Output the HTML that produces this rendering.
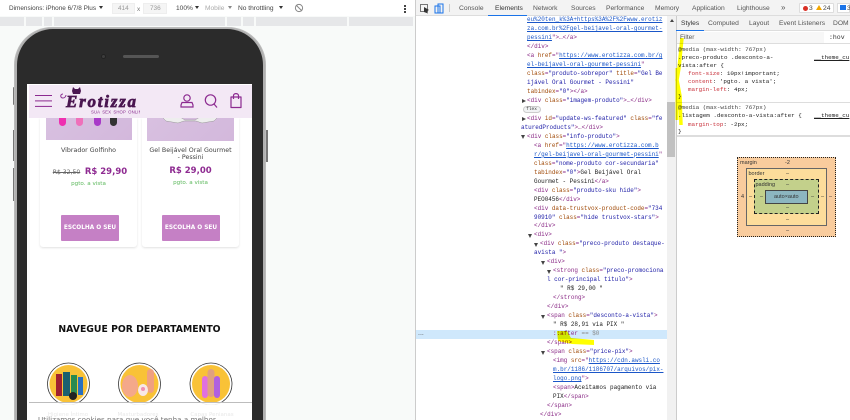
<!DOCTYPE html>
<html><head><meta charset="utf-8">
<style>
html,body{margin:0;padding:0;width:850px;height:420px;overflow:hidden;background:#fff}
*{box-sizing:border-box}
#wrap{position:absolute;left:0;top:0;width:850px;height:420px;overflow:hidden;filter:blur(.3px)}
.abs,.x{position:absolute}
.ui{font-family:"Liberation Sans",sans-serif;font-size:7px;color:#444;white-space:nowrap;position:absolute;line-height:9px}
.m{font-family:"DejaVu Sans","Liberation Sans",sans-serif;position:absolute;white-space:nowrap;text-align:center}
#code{position:absolute;left:416px;top:16.2px;width:251px;height:404px;overflow:hidden;font-family:"Liberation Mono",monospace;font-size:5.95px;color:#222}
#code div{height:8.97px;line-height:8.97px;white-space:pre;position:relative}
.g{color:#8a2a86}.a{color:#a04a08}.v{color:#2020a8}.u{color:#1a56c8;text-decoration:underline}
.t,.d{position:absolute;top:2.5px;width:0;height:0}
.t{margin-left:-5px;border-left:4px solid #444;border-top:2px solid transparent;border-bottom:2px solid transparent}
.d{margin-left:-6px;border-top:4px solid #444;border-left:2px solid transparent;border-right:2px solid transparent}
.s{position:absolute;font-family:"Liberation Mono",monospace;font-size:5.9px;line-height:8px;white-space:pre;color:#222}
.p{color:#c8303a}
.bm{position:absolute;font-family:"Liberation Sans",sans-serif;font-size:5.5px;color:#333;line-height:6px;white-space:nowrap}
</style></head><body>
<div id="wrap">

<!-- left panel -->
<div class="abs" style="left:0;top:0;width:415px;height:420px;background:#f8faf9"></div>
<div class="abs" style="left:0;top:0;width:415px;height:16px;background:#fff"></div>
<div class="ui" style="left:9px;top:4px;font-size:6.4px">Dimensions: iPhone 6/7/8 Plus</div>
<div class="abs" style="left:99px;top:6px;border-top:3px solid #333;border-left:2px solid transparent;border-right:2px solid transparent"></div>
<div class="abs" style="left:112px;top:3px;width:23px;height:11px;background:#f5f5f5;border:1px solid #eee"></div>
<div class="abs" style="left:143px;top:3px;width:24px;height:11px;background:#f5f5f5;border:1px solid #eee"></div>
<div class="ui" style="left:118px;top:4px;font-size:6.4px;color:#999">414</div>
<div class="ui" style="left:137px;top:5px;font-size:6.4px;color:#777">x</div>
<div class="ui" style="left:150px;top:4px;font-size:6.4px;color:#999">736</div>
<div class="ui" style="left:176px;top:4px;font-size:6.6px">100%</div>
<div class="abs" style="left:195px;top:6px;border-top:3px solid #333;border-left:2px solid transparent;border-right:2px solid transparent"></div>
<div class="ui" style="left:205px;top:4px;font-size:6.6px;color:#aaa">Mobile</div>
<div class="abs" style="left:228px;top:6px;border-top:3px solid #888;border-left:2px solid transparent;border-right:2px solid transparent"></div>
<div class="ui" style="left:238px;top:4px;font-size:6.6px">No throttling</div>
<div class="abs" style="left:279px;top:6px;border-top:3px solid #333;border-left:2px solid transparent;border-right:2px solid transparent"></div>
<svg class="abs" style="left:294px;top:3px" width="10" height="10" viewBox="0 0 10 10"><circle cx="5" cy="5" r="3.6" fill="none" stroke="#888"/><path d="M2 2L8 8" stroke="#888"/></svg>
<div class="abs" style="left:404px;top:5px;width:1.5px;height:1.5px;background:#444;box-shadow:0 3px #444,0 6px #444"></div>
<!-- media bars -->
<div class="abs" style="left:0;top:17px;width:413px;height:9px;background:#e6e7e9"></div>
<div class="abs" style="left:24px;top:17px;width:2px;height:9px;background:#f8faf9"></div>
<div class="abs" style="left:42px;top:17px;width:2px;height:9px;background:#f8faf9"></div>
<div class="abs" style="left:52px;top:17px;width:2px;height:9px;background:#f8faf9"></div>
<div class="abs" style="left:225px;top:17px;width:2px;height:9px;background:#f8faf9"></div>
<div class="abs" style="left:241px;top:17px;width:2px;height:9px;background:#f8faf9"></div>
<div class="abs" style="left:254px;top:17px;width:2px;height:9px;background:#f8faf9"></div>
<div class="abs" style="left:347px;top:17px;width:2px;height:9px;background:#f8faf9"></div>

<!-- phone -->
<div class="abs" style="left:13px;top:87px;width:3px;height:18px;background:#777;border-radius:1px"></div>
<div class="abs" style="left:13px;top:130px;width:3px;height:31px;background:#777"></div>
<div class="abs" style="left:13px;top:168px;width:3px;height:33px;background:#777"></div>
<div class="abs" style="left:265px;top:130px;width:3px;height:32px;background:#777"></div>
<div class="abs" style="left:14px;top:27px;width:252px;height:393px;border-radius:38px 38px 0 0;background:#b0b0b0;border:1px solid #bbb;border-bottom:0"></div>
<div class="abs" style="left:16.5px;top:29px;width:246px;height:391px;border-radius:36px 36px 0 0;background:#2b2b2b"></div>
<div class="abs" style="left:101px;top:54px;width:5px;height:5px;border-radius:50%;background:#3d3d3d;border:1px solid #222"></div>
<div class="abs" style="left:123px;top:55px;width:36px;height:3px;border-radius:2px;background:#555"></div>
<!-- screen -->
<div class="abs" style="left:27px;top:84px;width:225px;height:336px;background:#fff"></div>

<!-- product images -->
<div class="abs" style="left:40px;top:118px;width:97px;height:129px;background:#fff;border-radius:0 0 3px 3px;box-shadow:0 1px 2px rgba(0,0,0,.12)"></div>
<div class="abs" style="left:142px;top:118px;width:97px;height:129px;background:#fff;border-radius:0 0 3px 3px;box-shadow:0 1px 2px rgba(0,0,0,.12)"></div>
<div class="abs" style="left:46px;top:118px;width:86px;height:22px;background:linear-gradient(135deg,#d8c0e0,#d3b8dc)"></div>
<div class="abs" style="left:147px;top:118px;width:87px;height:23px;background:linear-gradient(135deg,#d8c0e0,#d3b8dc)"></div>
<div class="abs" style="left:59px;top:116px;width:7px;height:10px;border-radius:0 0 4px 4px;background:#ef2fb0"></div>
<div class="abs" style="left:76px;top:116px;width:7px;height:10px;border-radius:0 0 4px 4px;background:#ef70ba"></div>
<div class="abs" style="left:94px;top:116px;width:7px;height:10px;border-radius:0 0 4px 4px;background:#a83ac8"></div>
<div class="abs" style="left:110px;top:116px;width:7px;height:10px;border-radius:0 0 4px 4px;background:#333"></div>
<svg class="abs" style="left:160px;top:117px" width="60" height="8"><path d="M2 0L20 0L25 3L35 3L40 0L58 0L54 4L42 6L36 4L24 4L18 6L6 4Z" fill="#eee" stroke="#999" stroke-width=".5"/></svg>

<!-- header -->
<div class="abs" style="left:29px;top:85px;width:223px;height:33px;background:#f3e8f5"></div>
<div class="abs" style="left:35px;top:95px;width:17px;height:1.4px;background:#8c2a90;box-shadow:0 5.4px #8c2a90,0 10.9px #8c2a90"></div>
<!-- logo -->
<svg class="abs" style="left:58px;top:85px" width="82" height="34" viewBox="0 0 82 34">
<path d="M5 9C2 9 2 13 5 13C7 13 8 11 8 10" fill="none" stroke="#8a2f90" stroke-width="1"/>
<path d="M14 6L15 2L17 4L20 4L22 2L23 6L22 9L15 9Z" fill="#4a1650"/>
<text x="8" y="22" font-family="Liberation Serif,serif" font-style="italic" font-weight="700" font-size="17" fill="#4a1650" stroke="#4a1650" stroke-width=".7" textLength="70" lengthAdjust="spacing">Erotizza</text>
<text x="33" y="28.500" font-family="Liberation Sans,sans-serif" font-size="4.300" fill="#8a2f90" letter-spacing=".1" word-spacing="1">SUA SEX SHOP ONLINE</text>
</svg>
<!-- header icons -->
<svg class="abs" style="left:178px;top:92px" width="68" height="18" viewBox="0 0 68 18" fill="none" stroke="#8c2a90" stroke-width="1.2">
<circle cx="9" cy="6" r="3.2"/><path d="M4 10.5H14L15 13V15H3V13Z"/>
<circle cx="32.5" cy="8" r="5.2"/><path d="M36 12L39 15.5"/>
<path d="M53 5H63V15.5H53Z" stroke-linejoin="round"/><path d="M55.5 7V3.5C55.500 1 60.500 1 60.500 3.500V7"/>
</svg>

<!-- product 1 -->
<div class="m" style="left:40px;top:147px;width:97px;font-size:6.300px;line-height:8px;color:#444">Vibrador Golfinho</div>
<div class="m" style="left:50px;top:168.500px;width:33px;font-size:6.100px;line-height:8px;color:#666;text-decoration:line-through">R$ 32,50</div>
<div class="m" style="left:84px;top:166px;width:44px;font-size:8.500px;line-height:12px;font-weight:700;color:#8e2a91">R$ 29,90</div>
<div class="m" style="left:40px;top:180px;width:97px;font-size:5.600px;line-height:8px;color:#5cb85c">pgto. a vista</div>
<div class="m" style="left:61px;top:215px;width:58px;height:26px;background:#c580c5;border-radius:1px;color:#fff;font-size:5.800px;font-weight:700;line-height:26px">ESCOLHA O SEU</div>
<!-- product 2 -->
<div class="m" style="left:142px;top:147px;width:97px;font-size:6.300px;line-height:7px;color:#444">Gel Beijável Oral Gourmet<br>- Pessini</div>
<div class="m" style="left:142px;top:165px;width:97px;font-size:8.500px;line-height:12px;font-weight:700;color:#8e2a91">R$ 29,00</div>
<div class="m" style="left:142px;top:179px;width:97px;font-size:5.600px;line-height:8px;color:#5cb85c">pgto. a vista</div>
<div class="m" style="left:162px;top:215px;width:58px;height:26px;background:#c580c5;border-radius:1px;color:#fff;font-size:5.800px;font-weight:700;line-height:26px">ESCOLHA O SEU</div>
<!-- heading -->
<div class="m" style="left:27px;top:322.500px;width:225px;font-size:9.300px;line-height:14px;font-weight:700;color:#111">NAVEGUE POR DEPARTAMENTO</div>
<!-- circles -->
<svg class="abs" style="left:27px;top:355px" width="225" height="50" viewBox="27 355 225 50">
<g fill="#fff" stroke="#333" stroke-width=".8"><circle cx="68.5" cy="384" r="21"/><circle cx="139.5" cy="384" r="21"/><circle cx="211" cy="384" r="21"/></g>
<g fill="#f9c237"><circle cx="68.5" cy="384" r="19"/><circle cx="139.5" cy="384" r="19"/><circle cx="211" cy="384" r="19"/></g>
<rect x="56" y="374" width="6" height="22" fill="#a02030"/><rect x="63" y="372" width="7" height="24" fill="#1a6070"/><rect x="71" y="375" width="6" height="21" fill="#2a8a50"/><rect x="78" y="377" width="5" height="18" fill="#2a70c0"/><circle cx="73" cy="396" r="4" fill="#222"/>
<ellipse cx="130" cy="386" rx="8" ry="11" fill="#f4a88a"/><rect x="147" y="369" width="7" height="24" rx="3.5" fill="#f0a080"/><ellipse cx="143" cy="390" rx="5" ry="6" fill="#f8e8e8"/><circle cx="143" cy="389" r="2" fill="#f090b0"/>
<rect x="202" y="376" width="6" height="22" rx="3" fill="#e070e0"/><rect x="207.500" y="369" width="7" height="28" rx="3.500" fill="#e0a080"/><rect x="214" y="376" width="6" height="22" rx="3" fill="#b060e0"/>
</svg>
<!-- cookie overlay -->
<div class="abs" style="left:29px;top:402px;width:223px;height:18px;background:rgba(255,255,255,.9);border-top:1.2px solid #bdbdbd"></div>
<div class="m" style="left:38px;top:411px;width:60px;font-size:5.500px;line-height:8px;color:#e8e8e8">Higiene Íntimo</div>
<div class="m" style="left:108px;top:411px;width:60px;font-size:5.500px;line-height:8px;color:#e8e8e8">Masturbadores</div>
<div class="m" style="left:182px;top:411px;width:60px;font-size:5.500px;line-height:8px;color:#e8e8e8">Capas Penianas</div>
<div class="m" style="left:38px;top:415px;font-size:7.200px;line-height:9px;color:#777">Utilizamos cookies para que você tenha a melhor</div>

<!-- divider -->
<div class="abs" style="left:415px;top:0;width:1px;height:420px;background:#ccc"></div>

<!-- devtools tabs -->
<div class="abs" style="left:416px;top:0;width:434px;height:15.500px;background:#f3f3f3;border-bottom:1px solid #ddd"></div>
<svg class="abs" style="left:419px;top:3px" width="28" height="11" viewBox="0 0 28 11">
<rect x="1.500" y="1.500" width="7" height="7" fill="none" stroke="#555" stroke-width=".8"/><path d="M5 4L10 7L8 8L9 10.500L5 9Z" fill="#333"/>
<rect x="16" y="3" width="5" height="7" fill="none" stroke="#1a73e8"/><rect x="19" y="1" width="5" height="9" fill="none" stroke="#1a73e8"/>
</svg>
<div class="abs" style="left:449px;top:4px;width:1px;height:8px;background:#ccc"></div>
<div class="ui" style="left:459px;top:4px;font-size:6.700px;color:#555">Console</div>
<div class="ui" style="left:495px;top:4px;font-size:6.700px;color:#333">Elements</div>
<div class="abs" style="left:488px;top:14.500px;width:39px;height:1.500px;background:#1a73e8"></div>
<div class="ui" style="left:533px;top:4px;font-size:6.700px;color:#555">Network</div>
<div class="ui" style="left:571px;top:4px;font-size:6.700px;color:#555">Sources</div>
<div class="ui" style="left:606px;top:4px;font-size:6.700px;color:#555">Performance</div>
<div class="ui" style="left:655px;top:4px;font-size:6.700px;color:#555">Memory</div>
<div class="ui" style="left:692px;top:4px;font-size:6.700px;color:#555">Application</div>
<div class="ui" style="left:737px;top:4px;font-size:6.700px;color:#555">Lighthouse</div>
<div class="ui" style="left:781px;top:3px;font-size:8px;color:#555">»</div>
<div class="abs" style="left:799px;top:3px;width:35px;height:10px;background:#fff;border:1px solid #ddd;border-radius:1px"></div>
<div class="abs" style="left:803px;top:5.500px;width:5px;height:5px;border-radius:50%;background:#d93025"></div>
<div class="ui" style="left:809px;top:4px;font-size:6.700px">3</div>
<div class="abs" style="left:816px;top:5px;border-bottom:5.500px solid #f2a600;border-left:3px solid transparent;border-right:3px solid transparent"></div>
<div class="ui" style="left:823px;top:4px;font-size:6.700px">24</div>
<div class="abs" style="left:837px;top:3px;width:13px;height:10px;background:#fff;border:1px solid #ddd"></div>
<div class="abs" style="left:840px;top:5px;width:6px;height:5px;background:#1a73e8"></div>
<div class="ui" style="left:847px;top:4px;font-size:6.700px">3</div>

<!-- code -->
<div class="abs" style="left:416px;top:330px;width:251px;height:9px;background:#cfe8fc"></div>
<div class="ui" style="left:418px;top:329px;font-size:7px;color:#555">...</div>
<div id="code">
<div style="margin-left:111px"><span class="u">eu%20ten_k%3A+https%3A%2F%2Fwww.erotiz</span></div>
<div style="margin-left:111px"><span class="u">za.com.br%2Fgel-beijavel-oral-gourmet-</span></div>
<div style="margin-left:111px"><span class="u">pessini</span><span class="g">"&gt;…&lt;/a&gt;</span></div>
<div style="margin-left:111px"><span class="g">&lt;/div&gt;</span></div>
<div style="margin-left:111px"><span class="g">&lt;a </span><span class="a">href</span><span class="g">="</span><span class="u">https://www.erotizza.com.br/g</span></div>
<div style="margin-left:111px"><span class="u">el-beijavel-oral-gourmet-pessini</span><span class="g">"</span></div>
<div style="margin-left:111px"><span class="a">class</span><span class="g">=</span><span class="v">"produto-sobrepor"</span> <span class="a">title</span><span class="g">=</span><span class="v">"Gel Be</span></div>
<div style="margin-left:111px"><span class="v">ijável Oral Gourmet - Pessini"</span></div>
<div style="margin-left:111px"><span class="a">tabindex</span><span class="g">=</span><span class="v">"0"</span><span class="g">&gt;&lt;/a&gt;</span></div>
<div style="margin-left:111px"><i class="t"></i><span class="g">&lt;div </span><span class="a">class</span><span class="g">=</span><span class="v">"imagem-produto"</span><span class="g">&gt;…&lt;/div&gt;</span></div>
<div></div>
<div style="margin-left:111px"><i class="t"></i><span class="g">&lt;div </span><span class="a">id</span><span class="g">=</span><span class="v">"update-ws-featured"</span> <span class="a">class</span><span class="g">=</span><span class="v">"fe</span></div>
<div style="margin-left:105px"><span class="v">aturedProducts"</span><span class="g">&gt;…&lt;/div&gt;</span></div>
<div style="margin-left:111px"><i class="d"></i><span class="g">&lt;div </span><span class="a">class</span><span class="g">=</span><span class="v">"info-produto"</span><span class="g">&gt;</span></div>
<div style="margin-left:118px"><span class="g">&lt;a </span><span class="a">href</span><span class="g">="</span><span class="u">https://www.erotizza.com.b</span></div>
<div style="margin-left:118px"><span class="u">r/gel-beijavel-oral-gourmet-pessini</span><span class="g">"</span></div>
<div style="margin-left:118px"><span class="a">class</span><span class="g">=</span><span class="v">"nome-produto cor-secundaria"</span></div>
<div style="margin-left:118px"><span class="a">tabindex</span><span class="g">=</span><span class="v">"0"</span><span class="g">&gt;</span>Gel Beijável Oral</div>
<div style="margin-left:118px">Gourmet - Pessini<span class="g">&lt;/a&gt;</span></div>
<div style="margin-left:118px"><span class="g">&lt;div </span><span class="a">class</span><span class="g">=</span><span class="v">"produto-sku hide"</span><span class="g">&gt;</span></div>
<div style="margin-left:118px">PEO0456<span class="g">&lt;/div&gt;</span></div>
<div style="margin-left:118px"><span class="g">&lt;div </span><span class="a">data-trustvox-product-code</span><span class="g">=</span><span class="v">"734</span></div>
<div style="margin-left:118px"><span class="v">90910"</span> <span class="a">class</span><span class="g">=</span><span class="v">"hide trustvox-stars"</span><span class="g">&gt;</span></div>
<div style="margin-left:118px"><span class="g">&lt;/div&gt;</span></div>
<div style="margin-left:118px"><i class="d"></i><span class="g">&lt;div&gt;</span></div>
<div style="margin-left:124px"><i class="d"></i><span class="g">&lt;div </span><span class="a">class</span><span class="g">=</span><span class="v">"preco-produto destaque-</span></div>
<div style="margin-left:118px"><span class="v">avista "</span><span class="g">&gt;</span></div>
<div style="margin-left:131px"><i class="d"></i><span class="g">&lt;div&gt;</span></div>
<div style="margin-left:137px"><i class="d"></i><span class="g">&lt;strong </span><span class="a">class</span><span class="g">=</span><span class="v">"preco-promociona</span></div>
<div style="margin-left:131px"><span class="v">l cor-principal titulo"</span><span class="g">&gt;</span></div>
<div style="margin-left:144px">" R$ 29,00 "</div>
<div style="margin-left:137px"><span class="g">&lt;/strong&gt;</span></div>
<div style="margin-left:131px"><span class="g">&lt;/div&gt;</span></div>
<div style="margin-left:131px"><i class="d"></i><span class="g">&lt;span </span><span class="a">class</span><span class="g">=</span><span class="v">"desconto-a-vista"</span><span class="g">&gt;</span></div>
<div style="margin-left:137px">" R$ 28,91 via PIX "</div>
<div style="margin-left:137px"><span class="g">::after</span> <span style="color:#888">== $0</span></div>
<div style="margin-left:131px"><span class="g">&lt;/span&gt;</span></div>
<div style="margin-left:131px"><i class="d"></i><span class="g">&lt;span </span><span class="a">class</span><span class="g">=</span><span class="v">"price-pix"</span><span class="g">&gt;</span></div>
<div style="margin-left:137px"><span class="g">&lt;img </span><span class="a">src</span><span class="g">="</span><span class="u">https://cdn.awsli.co</span></div>
<div style="margin-left:137px"><span class="u">m.br/1186/1186707/arquivos/pix-</span></div>
<div style="margin-left:137px"><span class="u">logo.png</span><span class="g">"&gt;</span></div>
<div style="margin-left:137px"><span class="g">&lt;span&gt;</span>Aceitamos pagamento via</div>
<div style="margin-left:137px">PIX<span class="g">&lt;/span&gt;</span></div>
<div style="margin-left:131px"><span class="g">&lt;/span&gt;</span></div>
<div style="margin-left:124px"><span class="g">&lt;/div&gt;</span></div>
</div>
<div class="abs" style="left:522.500px;top:105.500px;width:18px;height:7px;background:#f1f3f4;border:.6px solid #ccc;border-radius:4px;font:4.500px/6px 'Liberation Mono',monospace;text-align:center;color:#333">flex</div>
<!-- scrollbar -->
<div class="abs" style="left:667px;top:16px;width:9px;height:404px;background:#f1f1f1"></div>
<div class="abs" style="left:669.500px;top:19px;border-bottom:3px solid #444;border-left:2px solid transparent;border-right:2px solid transparent"></div>
<div class="abs" style="left:667px;top:102px;width:8px;height:55px;background:#c1c1c1"></div>

<!-- styles panel -->
<div class="abs" style="left:676px;top:16px;width:174px;height:404px;background:#fff;border-left:1px solid #ccc"></div>
<div class="abs" style="left:677px;top:16px;width:173px;height:15px;background:#f3f3f3;border-bottom:1px solid #ddd"></div>
<div class="ui" style="left:681px;top:19px;font-size:6.700px;color:#333">Styles</div>
<div class="abs" style="left:676px;top:29.500px;width:28px;height:1.500px;background:#1a73e8"></div>
<div class="ui" style="left:708px;top:19px;font-size:6.700px;color:#555">Computed</div>
<div class="ui" style="left:749px;top:19px;font-size:6.700px;color:#555">Layout</div>
<div class="ui" style="left:779px;top:19px;font-size:6.700px;color:#555">Event Listeners</div>
<div class="ui" style="left:833px;top:19px;font-size:6.700px;color:#555">DOM</div>
<div class="abs" style="left:677px;top:31px;width:173px;height:13px;background:#fff;border-bottom:1px solid #ddd"></div>
<div class="abs" style="left:677px;top:32px;width:147px;height:11px;background:#f7f7f7"></div>
<div class="ui" style="left:680px;top:33px;font-size:6.500px;color:#555">Filter</div>
<div class="ui" style="left:829px;top:33px;font-size:6.500px;color:#333;font-family:'Liberation Mono',monospace">:hov</div>
<div class="s" style="left:678px;top:46px;color:#444">@media (max-width: 767px)</div>
<div class="s" style="left:678px;top:53.500px">.preco-produto .desconto-a-</div>
<div class="s" style="left:678px;top:61.500px">vista:after {</div>
<div class="s" style="left:688px;top:69.500px"><span class="p">font-size</span>: 10px!important;</div>
<div class="s" style="left:688px;top:77.500px"><span class="p">content</span>: 'pgto. a vista';</div>
<div class="s" style="left:688px;top:85.500px"><span class="p">margin-left</span>: 4px;</div>
<div class="s" style="left:678px;top:93px">}</div>
<div class="abs" style="left:677px;top:102px;width:173px;height:1px;background:#ddd"></div>
<div class="s" style="left:678px;top:104px;color:#444">@media (max-width: 767px)</div>
<div class="s" style="left:678px;top:112px">.listagem .desconto-a-vista:after {</div>
<div class="s" style="left:688px;top:120.500px"><span class="p">margin-top</span>: -2px;</div>
<div class="s" style="left:678px;top:128px">}</div>
<div class="s" style="left:814px;top:53.500px;text-decoration:underline">__theme_cu</div>
<div class="s" style="left:814px;top:112px;text-decoration:underline">__theme_cu</div>
<div class="abs" style="left:677px;top:135px;width:173px;height:1.500px;background:#ddd"></div>

<!-- box model -->
<div class="abs" style="left:737px;top:157px;width:99px;height:80px;background:#f9cc9d;border:1px dotted #222"></div>
<div class="abs" style="left:746px;top:168px;width:81px;height:58px;background:#fddd9b;border:1.500px solid #666"></div>
<div class="abs" style="left:754px;top:179px;width:65px;height:35px;background:#c3d08b;border:1px dashed #222"></div>
<div class="abs" style="left:765px;top:190px;width:43px;height:13.500px;background:#8cb6c0;border:1.500px solid #444"></div>
<div class="bm" style="left:740px;top:160px">margin</div>
<div class="bm" style="left:785px;top:160px">-2</div>
<div class="bm" style="left:748.500px;top:171px">border</div>
<div class="bm" style="left:755.500px;top:182px">padding</div>
<div class="bm" style="left:774px;top:194px">auto×auto</div>
<div class="bm" style="left:786px;top:171px">–</div><div class="bm" style="left:786px;top:182px">–</div><div class="bm" style="left:786px;top:205px">–</div><div class="bm" style="left:786px;top:217px">–</div><div class="bm" style="left:786px;top:228px">–</div>
<div class="bm" style="left:741px;top:194px">4</div><div class="bm" style="left:749px;top:194px">–</div><div class="bm" style="left:760px;top:194px">–</div><div class="bm" style="left:811px;top:194px">–</div><div class="bm" style="left:821px;top:194px">–</div><div class="bm" style="left:829px;top:194px">–</div>

<!-- yellow marks -->
<svg class="abs" style="left:0;top:0;pointer-events:none;mix-blend-mode:multiply" width="850" height="420" viewBox="0 0 850 420">
<path d="M557 331H567L571 338L594 340L594 345L572 344L558 341Z" fill="#ffff00"/>
<path d="M682 38L679 68L677 80L680 96L681 125" fill="none" stroke="#ffff00" stroke-width="3.500"/>
<path d="M677 68V120" stroke="#ffff00" stroke-width="3" fill="none"/>
</svg>
</div>
</body></html>
